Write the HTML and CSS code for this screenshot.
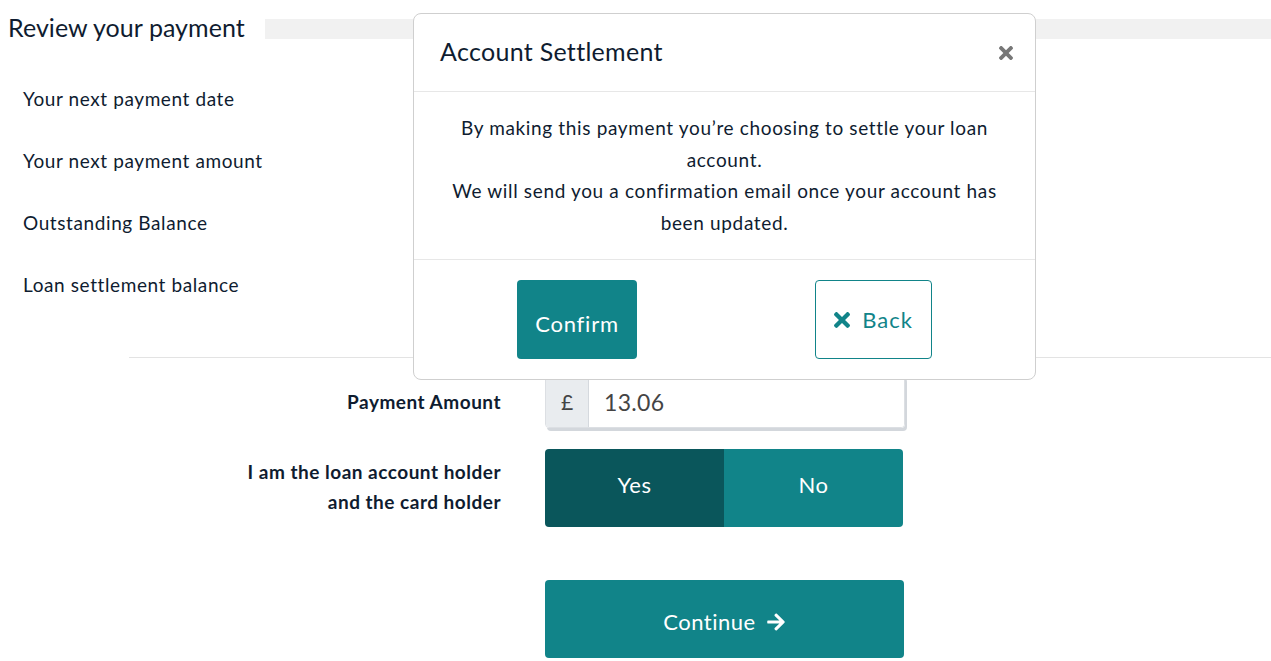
FILE: index.html
```html
<!DOCTYPE html>
<html lang="en">
<head>
  <meta charset="UTF-8">
  <title>Review your payment</title>
  <link rel="stylesheet" href="styles.css">
</head>
<body>
  <div class="page-head">
    <h1>Review your payment</h1>
    <div class="head-bar"></div>
  </div>

  <!-- Summary rows -->
  <div class="summary">
    <div class="summary-row">Your next payment date</div>
    <div class="summary-row">Your next payment amount</div>
    <div class="summary-row">Outstanding Balance</div>
    <div class="summary-row">Loan settlement balance</div>
  </div>

  <hr class="divider">

  <!-- Payment form -->
  <form class="pay-form">
    <div class="form-row amount-row">
      <label class="form-label">Payment Amount</label>
      <div class="input-group">
        <span class="input-prefix">£</span>
        <input type="text" value="13.06">
      </div>
    </div>

    <div class="form-row holder-row">
      <label class="form-label">I am the loan account holder<br>and the card holder</label>
      <div class="toggle">
        <button type="button" class="toggle-btn active">Yes</button>
        <button type="button" class="toggle-btn">No</button>
      </div>
    </div>

    <div class="form-row continue-row">
      <div></div>
      <button type="submit" class="continue-btn">Continue
        <svg width="20" height="20" viewBox="0 0 448 512"><path fill="#fff" d="M190.5 66.9l22.2-22.2c9.4-9.4 24.6-9.4 33.9 0L441 239c9.4 9.4 9.4 24.6 0 33.9L246.6 467.3c-9.4 9.4-24.6 9.4-33.9 0l-22.2-22.2c-9.5-9.5-9.3-25 .4-34.3L311.4 296H24c-13.3 0-24-10.7-24-24v-32c0-13.3 10.7-24 24-24h287.4L190.9 101.2c-9.8-9.3-10-24.8-.4-34.3z"/></svg>
      </button>
    </div>
  </form>

  <!-- Settlement modal -->
  <div class="modal">
    <div class="modal-header">
      <h2>Account Settlement</h2>
      <span class="modal-close">
        <svg width="14" height="14" viewBox="0 80 352 352"><path fill="#777" d="M242.7 256l100.1-100.1c12.3-12.3 12.3-32.2 0-44.5l-22.2-22.2c-12.3-12.3-32.2-12.3-44.5 0L176 189.3 75.9 89.2c-12.3-12.3-32.2-12.3-44.5 0L9.2 111.4c-12.3 12.3-12.3 32.2 0 44.5L109.3 256 9.2 356.1c-12.3 12.3-12.3 32.2 0 44.5l22.2 22.2c12.3 12.3 32.2 12.3 44.5 0L176 322.7l100.1 100.1c12.3 12.3 32.2 12.3 44.5 0l22.2-22.2c12.3-12.3 12.3-32.2 0-44.5L242.7 256z"/></svg>
      </span>
    </div>
    <div class="modal-body">
      <p>By making this payment you’re choosing to settle your loan account.</p>
      <p>We will send you a confirmation email once your account has been updated.</p>
    </div>
    <div class="modal-footer">
      <button type="button" class="btn-confirm">Confirm</button>
      <button type="button" class="btn-back">
        <svg width="16" height="16" viewBox="0 80 352 352"><path fill="#118489" d="M242.7 256l100.1-100.1c12.3-12.3 12.3-32.2 0-44.5l-22.2-22.2c-12.3-12.3-32.2-12.3-44.5 0L176 189.3 75.9 89.2c-12.3-12.3-32.2-12.3-44.5 0L9.2 111.4c-12.3 12.3-12.3 32.2 0 44.5L109.3 256 9.2 356.1c-12.3 12.3-12.3 32.2 0 44.5l22.2 22.2c12.3 12.3 32.2 12.3 44.5 0L176 322.7l100.1 100.1c12.3 12.3 32.2 12.3 44.5 0l22.2-22.2c12.3-12.3 12.3-32.2 0-44.5L242.7 256z"/></svg>
        Back
      </button>
    </div>
  </div>
</body>
</html>
```

FILE: styles.css
```css
body {
  margin: 0;
  font-family: Lato, "Open Sans", sans-serif;
  color: #0f1c30;
  background: #fff;
}

.page-head {
  display: flex;
  align-items: flex-start;
  height: 56px;
}

.page-head h1 {
  margin: 12px 0 0 8px;
  font-size: 25px;
  font-weight: 400;
  line-height: 30px;
  letter-spacing: 0.05px;
}

.head-bar {
  flex: 1;
  height: 20px;
  margin: 19px 0 0 20px;
  background: #f1f1f1;
}

.summary {
  padding-left: 23px;
  padding-top: 12px;
}

.summary-row {
  height: 62px;
  font-size: 19px;
  line-height: 62px;
  letter-spacing: 0.6px;
}

.divider {
  margin: 41px 0 0 129px;
  border: none;
  border-top: 1px solid #e3e3e3;
}

.pay-form {
  margin-top: 17px;
}

.form-row {
  display: grid;
  grid-template-columns: 501px 360px;
  column-gap: 44px;
}

.form-label {
  text-align: right;
  font-weight: 700;
  font-size: 19px;
  line-height: 30px;
  letter-spacing: 0.5px;
}

.amount-row {
  height: 53px;
  margin-bottom: 21px;
  align-items: center;
}

.input-group {
  display: flex;
  height: 51px;
  border: 1px solid #dcdfe3;
  border-radius: 4px;
  box-shadow: 2px 3px 0 #d3d7dc;
  overflow: hidden;
  width: 358px;
}

.input-prefix {
  flex: none;
  width: 42px;
  background: #e9ecef;
  border-right: 1px solid #d5d9de;
  color: #444;
  font-size: 21px;
  display: flex;
  align-items: center;
  justify-content: center;
}

.input-group input {
  flex: 1;
  min-width: 0;
  border: none;
  padding: 0 15px;
  font-family: inherit;
  font-size: 23px;
  letter-spacing: 0.3px;
  color: #444;
  outline: none;
}

.holder-row {
  height: 131px;
}

.holder-row .form-label {
  padding-top: 8px;
}

.toggle {
  display: flex;
  height: 78px;
  width: 358px;
  border-radius: 4px;
  overflow: hidden;
}

.toggle-btn {
  flex: 1;
  border: none;
  background: #118489;
  color: #fff;
  font-family: inherit;
  font-size: 22px;
  letter-spacing: 0.5px;
  padding-bottom: 8px;
}

.toggle-btn.active {
  background: #0a565b;
}

.continue-btn {
  width: 359px;
  height: 78px;
  border: none;
  border-radius: 4px;
  background: #118489;
  color: #fff;
  font-family: inherit;
  font-size: 22px;
  letter-spacing: 0.5px;
  display: flex;
  align-items: center;
  justify-content: center;
  gap: 10px;
  padding-top: 6px;
}

/* modal overlay */
.modal {
  position: absolute;
  left: 413px;
  top: 13px;
  width: 621px;
  height: 365px;
  background: #fff;
  border: 1px solid #cfcfcf;
  border-radius: 8px;
}

.modal-header {
  display: flex;
  justify-content: space-between;
  align-items: center;
  height: 77px;
  padding: 0 22px 0 26px;
  border-bottom: 1px solid #e7e7e7;
}

.modal-header h2 {
  margin: 0 0 4px;
  font-size: 25px;
  font-weight: 400;
  letter-spacing: 0.3px;
}

.modal-close {
  display: flex;
}

.modal-body {
  height: 168px;
  border-bottom: 1px solid #e7e7e7;
  text-align: center;
  padding: 20px 36px 0;
  box-sizing: border-box;
  font-size: 19px;
  line-height: 31.7px;
  letter-spacing: 0.65px;
}

.modal-body p {
  margin: 0;
}

.modal-footer {
  display: flex;
  padding: 20px 0 0 103px;
}

.btn-confirm {
  width: 120px;
  height: 79px;
  border: none;
  border-radius: 4px;
  background: #118489;
  color: #fff;
  font-family: inherit;
  font-size: 22px;
  letter-spacing: 0.8px;
  padding-top: 8px;
}

.btn-back {
  width: 117px;
  height: 79px;
  margin-left: 178px;
  border: 1px solid #118489;
  border-radius: 4px;
  background: #fff;
  color: #118489;
  font-family: inherit;
  font-size: 22px;
  letter-spacing: 1px;
  display: flex;
  align-items: center;
  justify-content: center;
  gap: 12px;
}
```
